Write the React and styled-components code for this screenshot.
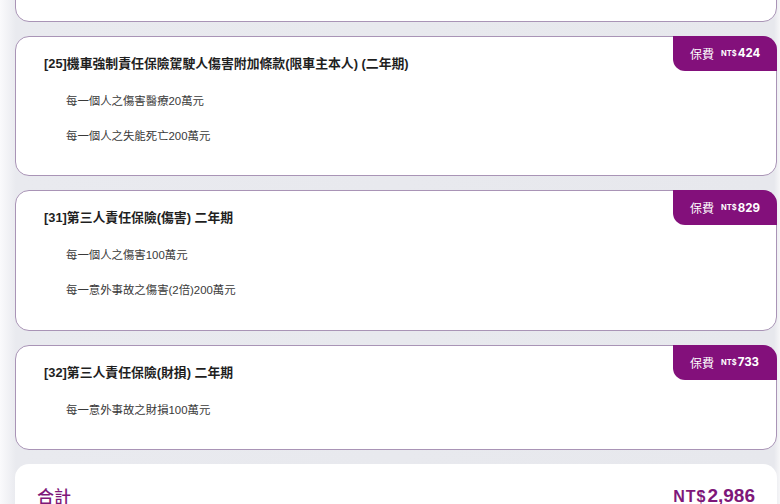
import React from "react";
import styled, { createGlobalStyle } from "styled-components";

const GlobalStyle = createGlobalStyle`
  html, body {
    margin: 0;
    padding: 0;
    overflow: hidden;
  }
  body {
    background: linear-gradient(to right, #fafafc 0px, #e9eaef 16px, #e7e8ed 774px, #f6f6f8 780px);
    font-family: "Liberation Sans", "Noto Sans CJK TC", sans-serif;
    width: 780px;
    height: 504px;
  }
`;

const List = styled.div`
  display: flex;
  flex-direction: column;
  gap: 14px;
  margin-top: -117px;
  padding: 0 3px 0 15px;
`;

const Card = styled.div`
  position: relative;
  background: #fff;
  border: 1px solid #a994b6;
  border-radius: 14px;
  padding: 18px 0 30.5px 28px;
  min-height: ${(p) => (p.$filler ? "88px" : "0")};
`;

const Title = styled.div`
  font-size: 12.85px;
  font-weight: 700;
  line-height: 18px;
  color: #1f1f1f;
`;

const Items = styled.div`
  display: flex;
  flex-direction: column;
  gap: 17px;
  margin-top: 19px;
  padding-left: 22px;
`;

const Item = styled.div`
  font-size: 11.4px;
  line-height: 18px;
  color: #3a3a3a;
`;

const Badge = styled.div`
  position: absolute;
  top: -1px;
  right: -1px;
  width: 104px;
  height: 35px;
  box-sizing: border-box;
  padding-left: 17px;
  display: flex;
  align-items: center;
  background: #83107b;
  color: #fff;
  border-radius: 0 14px 0 12px;
`;

const BadgeLabel = styled.span`
  font-size: 12px;
  margin-right: 7px;
`;

const Currency = styled.span`
  font-family: "Inter", "Liberation Sans", sans-serif;
  font-size: 7.5px;
  font-weight: 700;
  margin-right: 1px;
`;

const Amount = styled.span`
  font-family: "Inter", "Liberation Sans", sans-serif;
  font-size: 11.5px;
  font-weight: 700;
`;

const TotalCard = styled.div`
  background: #fff;
  border-radius: 14px;
  padding: 19px 22px 20px 22px;
  display: flex;
  justify-content: space-between;
  align-items: center;
`;

const TotalLabel = styled.div`
  font-family: "Noto Sans CJK TC", sans-serif;
  font-size: 17px;
  font-weight: 500;
  color: #7e1779;
`;

const TotalValue = styled.div`
  font-family: "Liberation Sans", sans-serif;
  font-weight: 700;
  color: #7e1779;
  display: flex;
  align-items: baseline;
`;

const TotalCurrency = styled.span`
  font-size: 16px;
  letter-spacing: 1px;
  margin-right: 1px;
`;

const TotalAmount = styled.span`
  font-size: 19px;
`;

const coverages = [
  {
    title: "[25]機車強制責任保險駕駛人傷害附加條款(限車主本人) (二年期)",
    fee: "424",
    items: ["每一個人之傷害醫療20萬元", "每一個人之失能死亡200萬元"],
  },
  {
    title: "[31]第三人責任保險(傷害) 二年期",
    fee: "829",
    items: ["每一個人之傷害100萬元", "每一意外事故之傷害(2倍)200萬元"],
  },
  {
    title: "[32]第三人責任保險(財損) 二年期",
    fee: "733",
    items: ["每一意外事故之財損100萬元"],
  },
];

export default function App() {
  return (
    <>
      <GlobalStyle />
      <List>
        <Card $filler />
        {coverages.map((c) => (
          <Card key={c.title}>
            <Title>{c.title}</Title>
            <Items>
              {c.items.map((it) => (
                <Item key={it}>{it}</Item>
              ))}
            </Items>
            <Badge>
              <BadgeLabel>保費</BadgeLabel>
              <Currency>NT$</Currency>
              <Amount>{c.fee}</Amount>
            </Badge>
          </Card>
        ))}
        <TotalCard>
          <TotalLabel>合計</TotalLabel>
          <TotalValue>
            <TotalCurrency>NT$</TotalCurrency>
            <TotalAmount>2,986</TotalAmount>
          </TotalValue>
        </TotalCard>
      </List>
    </>
  );
}
